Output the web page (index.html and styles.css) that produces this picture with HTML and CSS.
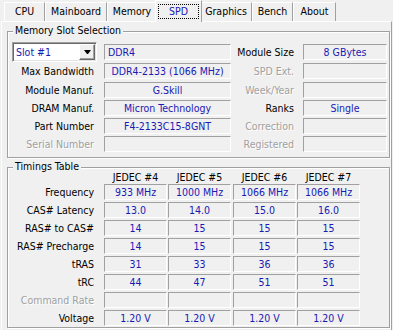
FILE: index.html
```html
<!DOCTYPE html>
<html lang="en">
<head>
    <meta charset="UTF-8">
    <title>CPU-Z SPD</title>
    <link rel="stylesheet" href="styles.css">
</head>
<body>
    <div class="tabs">
        <div class="tab w-cpu">CPU</div>
        <div class="tab w-mb">Mainboard</div>
        <div class="tab w-mem">Memory</div>
        <div class="tab w-spd active"><span>SPD</span></div>
        <div class="tab w-gfx">Graphics</div>
        <div class="tab w-bench">Bench</div>
        <div class="tab w-about">About</div>
    </div>

    <div class="panel">
        <div class="group slots">
            <div class="group-title">Memory Slot Selection</div>
            <div class="slot-grid">
                <div class="combo">
                    <span class="combo-text">Slot #1</span>
                    <span class="combo-btn"><i class="arrow"></i></span>
                </div>
                <div class="field left first">DDR4</div>
                <div class="label first">Module Size</div>
                <div class="field first">8 GBytes</div>

                <div class="label">Max Bandwidth</div>
                <div class="field">DDR4-2133 (1066 MHz)</div>
                <div class="label off">SPD Ext.</div>
                <div class="field"></div>

                <div class="label">Module Manuf.</div>
                <div class="field">G.Skill</div>
                <div class="label off">Week/Year</div>
                <div class="field"></div>

                <div class="label">DRAM Manuf.</div>
                <div class="field">Micron Technology</div>
                <div class="label">Ranks</div>
                <div class="field">Single</div>

                <div class="label">Part Number</div>
                <div class="field">F4-2133C15-8GNT</div>
                <div class="label off">Correction</div>
                <div class="field"></div>

                <div class="label off">Serial Number</div>
                <div class="field"></div>
                <div class="label off">Registered</div>
                <div class="field"></div>
            </div>
        </div>

        <div class="group timings">
            <div class="group-title">Timings Table</div>
            <div class="timing-grid" id="timingGrid"></div>
        </div>
    </div>

    <script>
        const columns = ['JEDEC #4', 'JEDEC #5', 'JEDEC #6', 'JEDEC #7'];
        const rows = [
            { name: 'Frequency', values: ['933 MHz', '1000 MHz', '1066 MHz', '1066 MHz'] },
            { name: 'CAS# Latency', values: ['13.0', '14.0', '15.0', '16.0'] },
            { name: 'RAS# to CAS#', values: ['14', '15', '15', '15'] },
            { name: 'RAS# Precharge', values: ['14', '15', '15', '15'] },
            { name: 'tRAS', values: ['31', '33', '36', '36'] },
            { name: 'tRC', values: ['44', '47', '51', '51'] },
            { name: 'Command Rate', values: ['', '', '', ''], off: true },
            { name: 'Voltage', values: ['1.20 V', '1.20 V', '1.20 V', '1.20 V'] }
        ];

        let html = '<div class="t-head"></div>';
        columns.forEach(col => {
            html += `<div class="t-head">${col}</div>`;
        });
        rows.forEach(row => {
            html += `<div class="t-label${row.off ? ' off' : ''}">${row.name}</div>`;
            row.values.forEach(v => {
                html += `<div class="t-cell">${v}</div>`;
            });
        });
        document.getElementById('timingGrid').innerHTML = html;
    </script>
</body>
</html>
```

FILE: styles.css
```css
body {
    margin: 0;
    width: 393px;
    height: 330px;
    overflow: hidden;
    background: #f0f0f0;
    color: #000;
    font-family: "DejaVu Sans Condensed", "Liberation Sans", sans-serif;
    font-size: 10.5px;
}

/* tab strip */
.tabs {
    display: flex;
    align-items: flex-end;
    height: 21px;
    padding-left: 4px;
    position: relative;
    z-index: 2;
}

.tab {
    box-sizing: border-box;
    height: 19px;
    border: 1px solid;
    border-color: #fff #a0a0a0 transparent #fff;
    border-bottom: none;
    text-align: center;
    line-height: 17px;
    white-space: nowrap;
}

.w-cpu { width: 41px; }
.w-mb { width: 62px; }
.w-mem { width: 50px; }
.w-spd { width: 43px; }
.w-gfx { width: 52px; }
.w-bench { width: 41px; }
.w-about { width: 43px; }

.tab.active {
    width: 47px;
    height: 22px;
    margin: 0 -2px -1px;
    background: #f0f0f0;
    position: relative;
    z-index: 3;
    color: #1a1ab4;
}

.tab.active span {
    display: block;
    height: 15px;
    margin: 3px 2px 0;
    box-sizing: border-box;
    border: 1px dotted #000;
    line-height: 13px;
}

/* tab page */
.panel {
    box-sizing: border-box;
    width: 391px;
    height: 320px;
    margin-left: 1px;
    padding-left: 5px;
    border: 1px solid;
    border-color: #fff #a0a0a0 #a0a0a0 #fff;
    overflow: hidden;
}

.group {
    position: relative;
    box-sizing: border-box;
    width: 383px;
    border: 1px solid #a0a0a0;
    box-shadow: inset 1px 1px 0 #fff, 1px 1px 0 #fff;
}

.group-title {
    position: absolute;
    top: -8px;
    left: 5px;
    padding: 0 2px;
    line-height: 13px;
    background: #f0f0f0;
}

.slots {
    margin-top: 9px;
    padding: 10px 0 4px;
}

.timings {
    margin-top: 9px;
    padding: 0 0 1px;
}

/* memory slot grid */
.slot-grid {
    display: grid;
    grid-template-columns: 96px 127px 72px 84px;
    grid-template-rows: 20px 19px repeat(4, 18px);
}

.label {
    margin-top: 1px;
    height: 16px;
    line-height: 16px;
    text-align: right;
    padding-right: 10px;
    white-space: nowrap;
}

.slot-grid .label:nth-child(4n+3) {
    padding-right: 9px;
}

.off {
    color: #a0a0a0;
    text-shadow: 1px 1px 0 #fff;
}

.field {
    box-sizing: border-box;
    margin-top: 1px;
    height: 16px;
    border: 1px solid;
    border-color: #a0a0a0 #fff #fff #a0a0a0;
    color: #1a1ab4;
    text-align: center;
    line-height: 14px;
    white-space: nowrap;
    overflow: hidden;
}

.field.left {
    text-align: left;
    padding-left: 3px;
}

.first {
    margin-top: 2px;
}

.combo {
    box-sizing: border-box;
    width: 85px;
    height: 20px;
    margin-left: 4px;
    display: flex;
    align-items: center;
    background: #fff;
    border: 1px solid;
    border-color: #a0a0a0 #fff #fff #a0a0a0;
    box-shadow: inset 1px 1px 0 #696969, inset -1px -1px 0 #e3e3e3;
}

.combo-text {
    padding-left: 3px;
    color: #1a1ab4;
}

.combo-btn {
    box-sizing: border-box;
    width: 16px;
    height: 16px;
    margin-left: auto;
    margin-right: 1px;
    display: flex;
    align-items: center;
    justify-content: center;
    background: #f0f0f0;
    border: 1px solid;
    border-color: #fff #696969 #696969 #fff;
    box-shadow: inset -1px -1px 0 #a0a0a0;
}

.arrow {
    width: 1px;
    height: 0;
    border-left: 3px solid transparent;
    border-right: 3px solid transparent;
    border-top: 4px solid #000;
}

/* timings grid */
.timing-grid {
    display: grid;
    grid-template-columns: 96px 64px 65px 64px 63px;
    grid-template-rows: 14px repeat(8, 16px);
    row-gap: 2px;
}

.t-head {
    width: 63px;
    padding-top: 3px;
    line-height: 12px;
    text-align: center;
    white-space: nowrap;
}

.t-head:first-child {
    width: auto;
}

.t-label {
    line-height: 16px;
    text-align: right;
    padding-right: 10px;
    white-space: nowrap;
}

.t-cell {
    box-sizing: border-box;
    width: 63px;
    height: 16px;
    border: 1px solid;
    border-color: #a0a0a0 #fff #fff #a0a0a0;
    color: #1a1ab4;
    text-align: center;
    line-height: 14px;
    white-space: nowrap;
}
```
